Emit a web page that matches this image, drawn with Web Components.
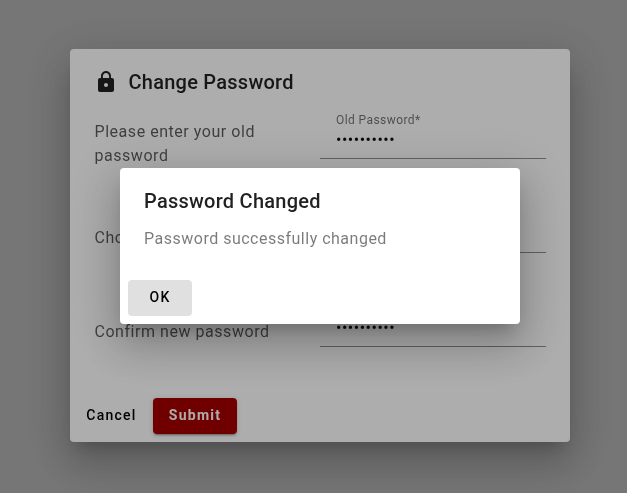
<!DOCTYPE html>
<html lang="en">
<head>
<meta charset="utf-8">
<title>Change Password</title>
<style>
html, body { margin: 0; height: 100%; overflow: hidden; background: #fff; font-family: Roboto, sans-serif; -webkit-font-smoothing: antialiased; }
</style>
</head>
<body>
<modal-layer>
  <dialog-surface style="--w:500px;--h:393px;--title-top:17px">
    <lock-icon slot="icon"></lock-icon>
    <span slot="title">Change Password</span>
    <password-row label="Old Password*" value="••••••••••">Please enter your old password</password-row>
    <password-row label="New Password*" value="••••••••••">Choose new password</password-row>
    <password-row label="Confirm Password*" value="••••••••••">Confirm new password</password-row>
    <action-button slot="actions">Cancel</action-button>
    <action-button slot="actions" kind="raised">Submit</action-button>
  </dialog-surface>
</modal-layer>
<modal-layer>
  <dialog-surface style="--w:400px;--h:156px;--title-top:17px">
    <span slot="title">Password Changed</span>
    <dialog-message>Password successfully changed</dialog-message>
    <action-button slot="actions" kind="focused">OK</action-button>
  </dialog-surface>
</modal-layer>
<script>
const define = (name, html, setup) => {
  customElements.define(name, class extends HTMLElement {
    constructor() {
      super();
      this.attachShadow({ mode: 'open' }).innerHTML = html;
    }
    connectedCallback() { if (setup) setup(this, this.shadowRoot); }
  });
};

define('modal-layer', `
<style>
:host { position: fixed; inset: 0; display: flex; justify-content: center; align-items: center; padding: 0 0 2px 13px; box-sizing: border-box; background: rgba(0,0,0,.32); }
</style><slot></slot>`);

define('dialog-surface', `
<style>
:host { display: flex; flex-direction: column; box-sizing: border-box; flex: none; width: var(--w); height: var(--h); background: #fff; border-radius: 4px;
  box-shadow: 0 11px 15px -7px rgba(0,0,0,.2), 0 24px 38px 3px rgba(0,0,0,.14), 0 9px 46px 8px rgba(0,0,0,.12); }
header { display: flex; align-items: center; gap: 10.5px; height: 32px; padding: var(--title-top) 24px 0; color: rgba(0,0,0,.87);
  font-size: 20px; font-weight: 500; line-height: 32px; letter-spacing: .25px; white-space: nowrap; }
main { flex: 1; padding: 0 24px; color: rgba(0,0,0,.64); font-size: 16px; line-height: 24px; letter-spacing: .5px; }
footer { display: flex; gap: 8px; padding: 8px; }
</style>
<header><slot name="icon"></slot><slot name="title"></slot></header>
<main><slot></slot></main>
<footer><slot name="actions"></slot></footer>`);

define('dialog-message', `
<style>:host { display: block; padding-top: 10px; color: rgba(0,0,0,.52); }</style><slot></slot>`);

define('lock-icon', `
<style>:host { display: block; width: 24px; height: 24px; } svg { display: block; }</style>
<svg width="24" height="24" viewBox="0 0 24 24" fill="currentColor"><path d="M18 8h-1V6c0-2.76-2.24-5-5-5S7 3.24 7 6v2H6c-1.1 0-2 .9-2 2v10c0 1.1.9 2 2 2h12c1.1 0 2-.9 2-2V10c0-1.1-.9-2-2-2zm-6 9c-1.1 0-2-.9-2-2s.9-2 2-2 2 .9 2 2-.9 2-2 2zm3.1-9H8.9V6c0-1.71 1.39-3.1 3.1-3.1s3.1 1.39 3.1 3.1v2z"/></svg>`);

define('password-row', `
<style>
:host { display: grid; grid-template-columns: 1fr 1fr; align-items: center; height: 94px; }
.prompt { padding: 0 24px 2px .5px; letter-spacing: .54px; }
.field { display: flex; flex-direction: column; box-sizing: border-box; height: 56px; padding: 9px 16px 0; margin-bottom: 28px; border-bottom: 1px solid rgba(0,0,0,.44); white-space: nowrap; overflow: hidden; }
.label { font-size: 12px; line-height: 16px; letter-spacing: .42px; color: rgba(0,0,0,.56); }
.value { font-size: 16px; line-height: 24px; letter-spacing: .52px; color: rgba(0,0,0,.95); }
</style>
<div class="prompt"><slot></slot></div>
<div class="field"><span class="label"></span><span class="value"></span></div>`,
(el, root) => {
  root.querySelector('.label').textContent = el.getAttribute('label');
  root.querySelector('.value').textContent = el.getAttribute('value');
});

define('action-button', `
<style>
:host { display: block; }
button { display: flex; align-items: center; justify-content: center; box-sizing: border-box; min-width: 64px; height: 36px; padding: 0 8px 2px; border: 0; border-radius: 4px; background: transparent; color: #000;
  font: 500 14px/34px Roboto, sans-serif; letter-spacing: 1.25px; }
:host([kind=raised]) button { width: 84px; padding: 0 0 2px; background: #a60000; color: #fff; font-weight: 700;
  box-shadow: 0 3px 1px -2px rgba(0,0,0,.2), 0 2px 2px rgba(0,0,0,.14), 0 1px 5px rgba(0,0,0,.12); }
:host(:not([kind])) button { width: 67px; }
:host([kind=focused]) button { background: #e0e0e0; }
</style>
<button type="button"><slot></slot></button>`);
</script>
</body>
</html>
